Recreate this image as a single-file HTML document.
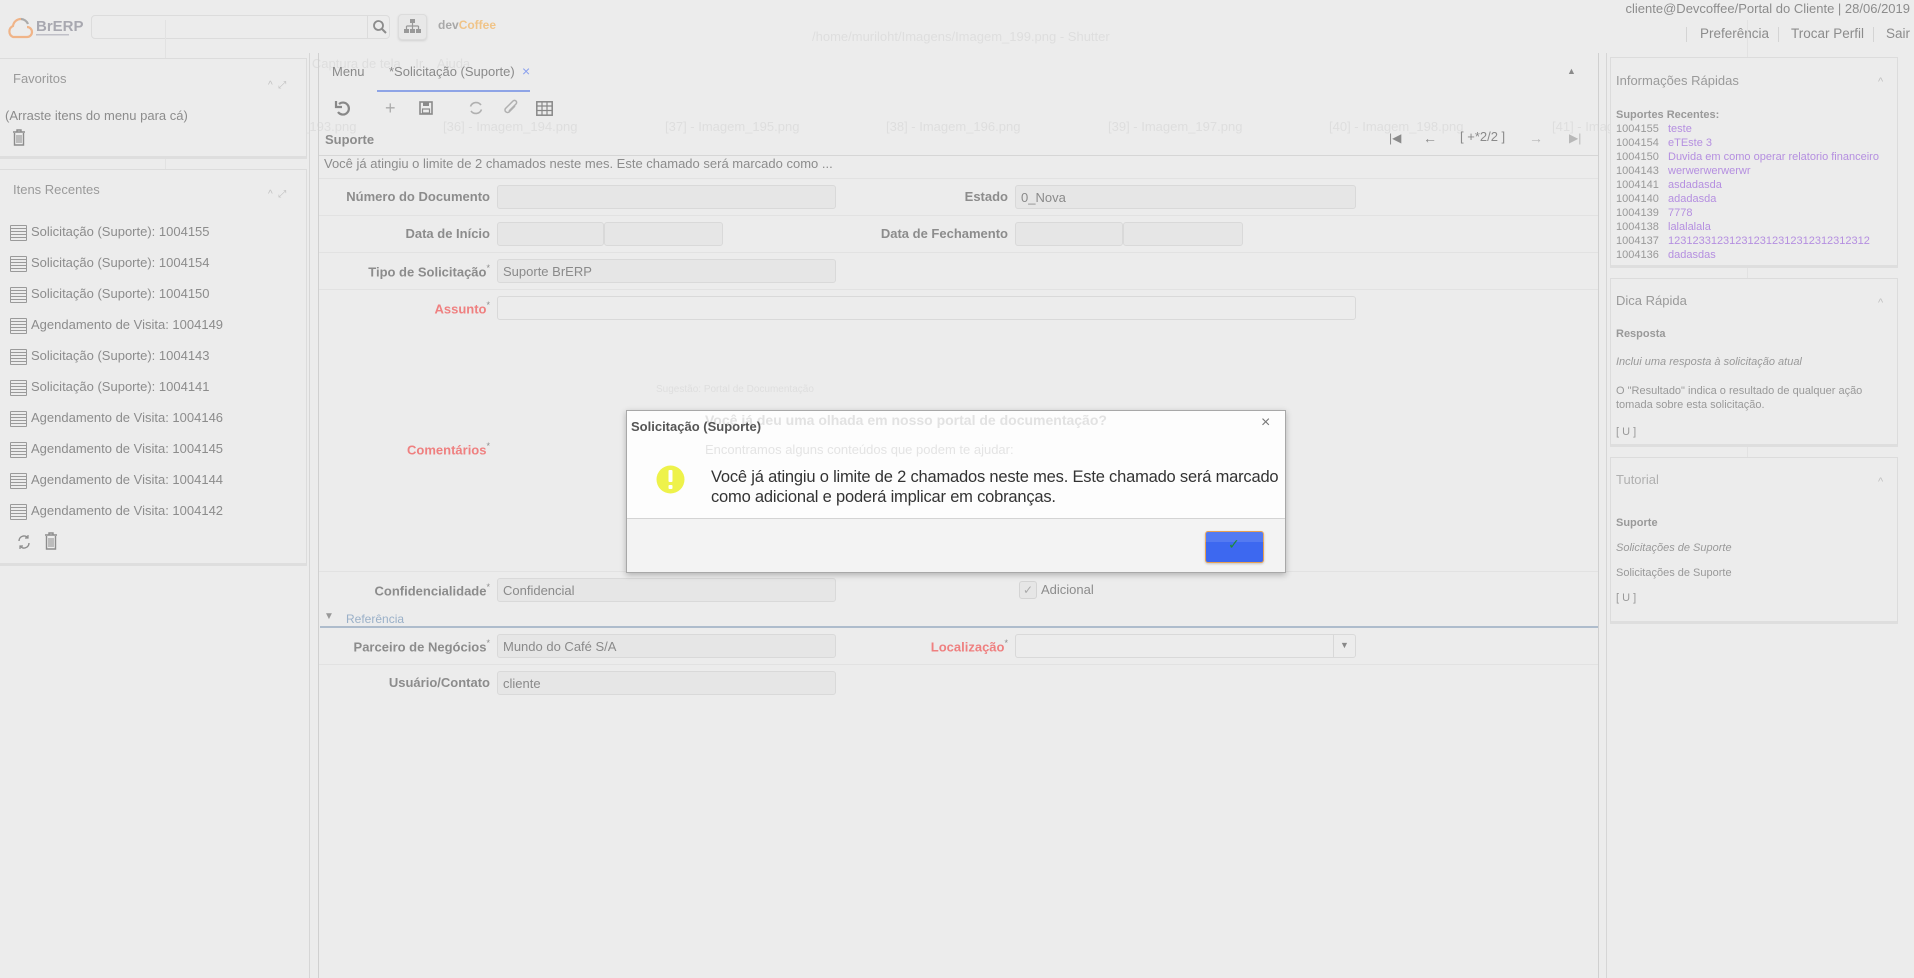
<!DOCTYPE html>
<html><head><meta charset="utf-8">
<style>
*{margin:0;padding:0;box-sizing:border-box}
body{width:1914px;height:978px;background:#ececec;font-family:"Liberation Sans",sans-serif;color:#8a8a8a;position:relative;overflow:hidden}
.a{position:absolute;white-space:nowrap}
.lbl{position:absolute;font-size:13px;font-weight:bold;color:#8c8c8c;text-align:right;white-space:nowrap}
.req{color:#ef8080}
.inp{position:absolute;background:#e6e6e6;border:1px solid #d9d9d9;border-radius:3px;font-size:13px;color:#8a8a8a;padding:4px 5px;height:24px;line-height:15px}
.hl{position:absolute;height:1px;background:#e2e2e2}
.box{position:absolute;border:1px solid #dcdcdc;border-bottom:3px solid #dedede;background:#ececec}
.ghost{position:absolute;color:#dedede;white-space:nowrap;font-size:13px}
.ri{position:absolute;left:10px;font-size:13px;color:#8c8c8c}
.ri:before{content:"";position:absolute;left:0;top:1px;width:15px;height:14px;border:1.5px solid #9a9a9a;border-radius:1px;background:repeating-linear-gradient(#ececec 0 2px,#9a9a9a 2px 3px) }
.ri span{margin-left:21px}
.sr{font-size:11px;line-height:14px}
.sr b{font-weight:normal;color:#999;display:inline-block;width:52px}
.sr i{font-style:normal;color:#b58fe0}
</style></head><body>

<svg class="a" style="left:7px;top:15px" width="80" height="24" viewBox="0 0 80 24">
<path d="M14 4 A8 8 0 0 0 6 11 A6 6 0 0 0 6 22 H20 A5 5 0 0 0 20 12" fill="none" stroke="#f0b488" stroke-width="2.2"/>
<path d="M14 4 A8 8 0 0 1 21 9" fill="none" stroke="#aaa" stroke-width="2.2"/>
<text x="29" y="16" font-family="Liberation Sans" font-weight="bold" font-size="15" fill="#a8a8b0">BrERP</text>
<rect x="29" y="19" width="33" height="1.5" fill="#c0c0c8"/>
</svg>
<div class="a" style="left:91px;top:15px;width:299px;height:24px;border:1px solid #dcdcdc;border-radius:4px;background:#ececec"></div>
<div class="a" style="left:367px;top:15px;width:1px;height:24px;background:#dcdcdc"></div>
<svg class="a" style="left:372px;top:19px" width="16" height="16"><circle cx="6.5" cy="6.5" r="4.5" fill="none" stroke="#8c8c8c" stroke-width="1.8"/><path d="M10 10 L14 14" stroke="#8c8c8c" stroke-width="2"/></svg>
<div class="a" style="left:398px;top:14px;width:29px;height:26px;border:1px solid #dcdcdc;border-radius:4px;background:#e8e8e8;box-shadow:0 1px 2px #d0d0d0"></div>
<svg class="a" style="left:404px;top:19px" width="17" height="15"><rect x="6" y="0" width="5" height="4" fill="#999"/><path d="M8.5 4V7M2.5 7H14.5M2.5 7V10M8.5 7V10M14.5 7V10" stroke="#999" stroke-width="1.2" fill="none"/><rect x="0" y="10" width="5" height="4" fill="#999"/><rect x="6" y="10" width="5" height="4" fill="#999"/><rect x="12" y="10" width="5" height="4" fill="#999"/></svg>
<div class="a" style="left:438px;top:18px;font-size:12px;font-weight:bold;color:#a8a8a8">dev<span style="color:#f0c488">Coffee</span></div>

<div class="a" style="right:4px;top:1px;font-size:13px;color:#8c8c8c">cliente@Devcoffee/Portal do Cliente | 28/06/2019</div>
<div class="a" style="left:1686px;top:27px;width:1px;height:15px;background:#d4d4d4"></div>
<div class="a" style="left:1700px;top:26px;font-size:13.5px;color:#8c8c8c">Preferência</div>
<div class="a" style="left:1778px;top:27px;width:1px;height:15px;background:#d4d4d4"></div>
<div class="a" style="left:1791px;top:26px;font-size:13.5px;color:#8c8c8c">Trocar Perfil</div>
<div class="a" style="left:1873px;top:27px;width:1px;height:15px;background:#d4d4d4"></div>
<div class="a" style="left:1886px;top:26px;font-size:13.5px;color:#8c8c8c">Sair</div>

<div class="ghost" style="left:812px;top:29px;font-size:13px">/home/muriloht/Imagens/Imagem_199.png - Shutter</div>
<div class="ghost" style="left:171px;top:56px">Arquivo &nbsp;&nbsp; Editar &nbsp;&nbsp; Ver &nbsp;&nbsp; Captura de tela &nbsp;&nbsp; Ir &nbsp;&nbsp; Ajuda</div>
<div class="ghost" style="left:222px;top:119px">[35] - Imagem_193.png</div>
<div class="ghost" style="left:443px;top:119px">[36] - Imagem_194.png</div>
<div class="ghost" style="left:665px;top:119px">[37] - Imagem_195.png</div>
<div class="ghost" style="left:886px;top:119px">[38] - Imagem_196.png</div>
<div class="ghost" style="left:1108px;top:119px">[39] - Imagem_197.png</div>
<div class="ghost" style="left:1329px;top:119px">[40] - Imagem_198.png</div>
<div class="ghost" style="left:1552px;top:119px">[41] - Imagem_199.png</div>
<div class="a" style="left:165px;top:20px;width:1px;height:520px;background:#e2e2e2"></div>
<div class="a" style="left:1747px;top:20px;width:1px;height:520px;background:#e2e2e2"></div>

<div class="box" style="left:-2px;top:58px;width:309px;height:101px"></div>
<div class="a" style="left:13px;top:71px;font-size:13px;color:#9a9a9a">Favoritos</div>
<div class="a" style="left:5px;top:108px;font-size:13px;color:#8c8c8c">(Arraste itens do menu para cá)</div>
<svg class="a" style="left:12px;top:129px" width="14" height="17"><path d="M1 3H13M5 3V1H9V3M2.5 4V16H11.5V4" fill="none" stroke="#8c8c8c" stroke-width="1.4"/><path d="M5 6V14M7 6V14M9 6V14" stroke="#8c8c8c" stroke-width="1"/></svg>
<div class="box" style="left:-2px;top:169px;width:309px;height:397px"></div>
<div class="a" style="left:13px;top:182px;font-size:13px;color:#9a9a9a">Itens Recentes</div>
<div class="a" style="left:268px;top:189px;font-size:10px;color:#c0c0c0">^ &nbsp;⤢</div>
<div class="a" style="left:268px;top:80px;font-size:10px;color:#c0c0c0">^ &nbsp;⤢</div>
<div class="ri" style="top:224px"><span>Solicitação (Suporte): 1004155</span></div>
<div class="ri" style="top:255px"><span>Solicitação (Suporte): 1004154</span></div>
<div class="ri" style="top:286px"><span>Solicitação (Suporte): 1004150</span></div>
<div class="ri" style="top:317px"><span>Agendamento de Visita: 1004149</span></div>
<div class="ri" style="top:348px"><span>Solicitação (Suporte): 1004143</span></div>
<div class="ri" style="top:379px"><span>Solicitação (Suporte): 1004141</span></div>
<div class="ri" style="top:410px"><span>Agendamento de Visita: 1004146</span></div>
<div class="ri" style="top:441px"><span>Agendamento de Visita: 1004145</span></div>
<div class="ri" style="top:472px"><span>Agendamento de Visita: 1004144</span></div>
<div class="ri" style="top:503px"><span>Agendamento de Visita: 1004142</span></div>
<svg class="a" style="left:17px;top:534px" width="14" height="16"><path d="M11 4A5 5 0 0 0 2 7M3 12A5 5 0 0 0 12 9" fill="none" stroke="#8c8c8c" stroke-width="1.4"/><path d="M11 1V4H8M3 15V12H6" fill="none" stroke="#8c8c8c" stroke-width="1.2"/></svg>
<svg class="a" style="left:44px;top:532px" width="14" height="18"><path d="M1 3H13M5 3V1H9V3M2.5 4V17H11.5V4" fill="none" stroke="#8c8c8c" stroke-width="1.4"/><path d="M5 6V15M7 6V15M9 6V15" stroke="#8c8c8c" stroke-width="1"/></svg>

<div class="a" style="left:309px;top:53px;width:1px;height:925px;background:#d6d6d6"></div>
<div class="a" style="left:318px;top:53px;width:1px;height:925px;background:#d0d0d0"></div>
<div class="a" style="left:1598px;top:53px;width:1px;height:925px;background:#d0d0d0"></div>
<div class="a" style="left:1606px;top:53px;width:1px;height:925px;background:#d6d6d6"></div>

<div class="a" style="left:332px;top:64px;font-size:13px;color:#8a8a8a">Menu</div>
<div class="a" style="left:389px;top:64px;font-size:13px;color:#8a8a8a">*Solicitação (Suporte)</div>
<div class="a" style="left:522px;top:63px;font-size:14px;color:#8aa0ee">×</div>
<div class="a" style="left:377px;top:90px;width:153px;height:2px;background:#8ea4e6"></div>
<div class="a" style="left:1567px;top:66px;font-size:9px;color:#8a8a8a">▲</div>
<svg class="a" style="left:334px;top:100px" width="18" height="18"><path d="M5 4A6 6 0 1 1 4 12" fill="none" stroke="#888" stroke-width="2.2"/><path d="M2 1V7H8" fill="none" stroke="#888" stroke-width="2.2"/></svg>
<div class="a" style="left:385px;top:98px;font-size:18px;color:#aaa">+</div>
<svg class="a" style="left:419px;top:101px" width="14" height="14"><rect x="1" y="1" width="12" height="12" fill="none" stroke="#8a8a8a" stroke-width="1.6"/><rect x="4" y="1" width="6" height="4" fill="#8a8a8a"/><rect x="3.5" y="8" width="7" height="4" fill="none" stroke="#8a8a8a" stroke-width="1.2"/></svg>
<svg class="a" style="left:468px;top:100px" width="16" height="16"><path d="M13 5A6 6 0 0 0 2.5 6.5M3 11A6 6 0 0 0 13.5 9.5" fill="none" stroke="#b0b0b0" stroke-width="1.6"/></svg>
<svg class="a" style="left:503px;top:99px" width="16" height="18"><path d="M12 7L6 13A2.5 2.5 0 0 1 2.5 9.5L10 2A2 2 0 0 1 13 5L6 12" fill="none" stroke="#b0b0b0" stroke-width="1.5"/></svg>
<svg class="a" style="left:536px;top:101px" width="17" height="15"><rect x="0.8" y="0.8" width="15.4" height="13.4" fill="none" stroke="#888" stroke-width="1.5"/><path d="M1 5H16M1 9.5H16M6 1V14M11 1V14" stroke="#888" stroke-width="1.2"/></svg>

<div class="a" style="left:325px;top:132px;font-size:13px;font-weight:bold;color:#8c8c8c">Suporte</div>
<div class="a" style="left:1389px;top:131px;font-size:12px;color:#8a8a8a">|◀</div>
<div class="a" style="left:1423px;top:130px;font-size:14px;color:#8a8a8a">←</div>
<div class="a" style="left:1460px;top:129px;font-size:13px;color:#8a8a8a">[ +*2/2 ]</div>
<div class="a" style="left:1529px;top:130px;font-size:14px;color:#b8b8b8">→</div>
<div class="a" style="left:1569px;top:131px;font-size:12px;color:#b8b8b8">▶|</div>
<div class="hl" style="left:319px;top:155px;width:1279px;background:#d6d6d6"></div>
<div class="a" style="left:324px;top:156px;font-size:13px;color:#8c8c8c">Você já atingiu o limite de 2 chamados neste mes. Este chamado será marcado como ...</div>

<div class="hl" style="left:319px;top:178px;width:1279px"></div>
<div class="hl" style="left:319px;top:215px;width:1279px"></div>
<div class="hl" style="left:319px;top:252px;width:1279px"></div>
<div class="hl" style="left:319px;top:289px;width:1279px"></div>
<div class="hl" style="left:319px;top:571px;width:1279px"></div>
<div class="hl" style="left:319px;top:664px;width:1279px"></div>

<div class="lbl" style="right:1424px;top:189px">Número do Documento</div>
<div class="inp" style="left:497px;top:185px;width:339px"></div>
<div class="lbl" style="right:906px;top:189px">Estado</div>
<div class="inp" style="left:1015px;top:185px;width:341px">0_Nova</div>

<div class="lbl" style="right:1424px;top:226px">Data de Início</div>
<div class="inp" style="left:497px;top:222px;width:107px"></div>
<div class="inp" style="left:604px;top:222px;width:119px"></div>
<div class="lbl" style="right:906px;top:226px">Data de Fechamento</div>
<div class="inp" style="left:1015px;top:222px;width:108px"></div>
<div class="inp" style="left:1123px;top:222px;width:120px"></div>

<div class="lbl" style="right:1424px;top:263px">Tipo de Solicitação<sup style="font-size:9px;font-weight:normal">*</sup></div>
<div class="inp" style="left:497px;top:259px;width:339px">Suporte BrERP</div>

<div class="lbl req" style="right:1424px;top:300px">Assunto<sup style="font-size:9px;font-weight:normal;color:#8c8c8c">*</sup></div>
<div class="inp" style="left:497px;top:296px;width:859px;background:#ececec"></div>

<div class="lbl req" style="right:1424px;top:441px">Comentários<sup style="font-size:9px;font-weight:normal;color:#8c8c8c">*</sup></div>
<div class="ghost" style="left:656px;top:384px;font-size:10px">Sugestão: Portal de Documentação</div>
<div class="a" style="left:705px;top:516px;font-size:13px;color:#d8d0ee;line-height:16px">Quais rotinas de manutenção precisam ser executadas no PostgreSQL<br>regularmente?</div>

<div class="lbl" style="right:1424px;top:582px">Confidencialidade<sup style="font-size:9px;font-weight:normal">*</sup></div>
<div class="inp" style="left:497px;top:578px;width:339px">Confidencial</div>
<div class="a" style="left:1019px;top:581px;width:18px;height:18px;border:1px solid #d4d4d4;border-radius:3px;background:#e6e6e6;font-size:12px;color:#aaa;text-align:center;line-height:16px">✓</div>
<div class="a" style="left:1041px;top:582px;font-size:13px;color:#8c8c8c">Adicional</div>

<div class="a" style="left:324px;top:611px;font-size:10px;color:#999">▼</div>
<div class="a" style="left:346px;top:612px;font-size:12px;color:#9ab0c8">Referência</div>
<div class="a" style="left:320px;top:626px;width:1278px;height:2px;background:#aebccc"></div>

<div class="lbl" style="right:1424px;top:638px">Parceiro de Negócios<sup style="font-size:9px;font-weight:normal">*</sup></div>
<div class="inp" style="left:497px;top:634px;width:339px">Mundo do Café S/A</div>
<div class="lbl req" style="right:906px;top:638px">Localização<sup style="font-size:9px;font-weight:normal;color:#8c8c8c">*</sup></div>
<div class="inp" style="left:1015px;top:634px;width:341px;background:#ececec"></div>
<div class="a" style="left:1333px;top:635px;width:1px;height:22px;background:#d8d8d8"></div>
<div class="a" style="left:1340px;top:640px;font-size:9px;color:#888">▼</div>

<div class="lbl" style="right:1424px;top:675px">Usuário/Contato</div>
<div class="inp" style="left:497px;top:671px;width:339px">cliente</div>

<div class="box" style="left:1610px;top:57px;width:288px;height:211px"></div>
<div class="a" style="left:1616px;top:73px;font-size:13px;color:#9a9a9a">Informações Rápidas</div>
<div class="a" style="left:1878px;top:76px;font-size:11px;color:#c0c0c0">^</div>
<div class="a sr" style="left:1616px;top:108px"><span style="font-weight:bold;color:#999">Suportes Recentes:</span><br>
<b>1004155</b><i>teste</i><br><b>1004154</b><i>eTEste 3</i><br><b>1004150</b><i>Duvida em como operar relatorio financeiro</i><br><b>1004143</b><i>werwerwerwerwr</i><br><b>1004141</b><i>asdadasda</i><br><b>1004140</b><i>adadasda</i><br><b>1004139</b><i>7778</i><br><b>1004138</b><i>lalalalala</i><br><b>1004137</b><i>123123312312312312312312312312312</i><br><b>1004136</b><i>dadasdas</i></div>

<div class="box" style="left:1610px;top:278px;width:288px;height:169px"></div>
<div class="a" style="left:1616px;top:293px;font-size:13px;color:#9a9a9a">Dica Rápida</div>
<div class="a" style="left:1878px;top:297px;font-size:11px;color:#c0c0c0">^</div>
<div class="a" style="left:1616px;top:328px;font-size:11px;font-weight:bold;color:#999">Resposta</div>
<div class="a" style="left:1616px;top:356px;font-size:11px;font-style:italic;color:#999">Inclui uma resposta à solicitação atual</div>
<div class="a" style="left:1616px;top:384px;font-size:11px;color:#999;line-height:14px">O "Resultado" indica o resultado de qualquer ação<br>tomada sobre esta solicitação.</div>
<div class="a" style="left:1616px;top:426px;font-size:11px;color:#999">[ U ]</div>

<div class="box" style="left:1610px;top:457px;width:288px;height:167px"></div>
<div class="a" style="left:1616px;top:472px;font-size:13px;color:#b0b0b0">Tutorial</div>
<div class="a" style="left:1878px;top:476px;font-size:11px;color:#c0c0c0">^</div>
<div class="a" style="left:1616px;top:517px;font-size:11px;font-weight:bold;color:#999">Suporte</div>
<div class="a" style="left:1616px;top:542px;font-size:11px;font-style:italic;color:#999">Solicitações de Suporte</div>
<div class="a" style="left:1616px;top:567px;font-size:11px;color:#999">Solicitações de Suporte</div>
<div class="a" style="left:1616px;top:592px;font-size:11px;color:#999">[ U ]</div>

<div class="a" style="left:626px;top:410px;width:660px;height:163px;border:1px solid #a8a8a8;background:#f3f3f3;box-shadow:0 2px 6px rgba(0,0,0,0.25)"></div>
<div class="a" style="left:627px;top:411px;width:658px;height:107px;background:rgba(255,255,255,0.78)"></div>
<div class="a" style="left:627px;top:518px;width:658px;height:1px;background:#d4d4d4"></div>
<div class="a" style="left:705px;top:412px;font-size:14px;font-weight:bold;color:#e2e2e2">Você já deu uma olhada em nosso portal de documentação?</div>
<div class="a" style="left:705px;top:442px;font-size:13px;color:#e4e4e4">Encontramos alguns conteúdos que podem te ajudar:</div>
<div class="a" style="left:631px;top:419px;font-size:13px;font-weight:bold;color:#555">Solicitação (Suporte)</div>
<div class="a" style="left:1261px;top:414px;font-size:16px;color:#777">×</div>
<svg class="a" style="left:656px;top:465px" width="29" height="29"><circle cx="14.5" cy="14.5" r="14" fill="#eef24a"/><rect x="12.5" y="5" width="4" height="12" rx="1" fill="#fff"/><rect x="12.5" y="20" width="4" height="4" rx="1" fill="#fff"/></svg>
<div class="a" style="left:711px;top:467px;font-size:16.5px;color:#333;line-height:20px;letter-spacing:-0.2px">Você já atingiu o limite de 2 chamados neste mes. Este chamado será marcado<br>como adicional e poderá implicar em cobranças.</div>
<div class="a" style="left:1205px;top:531px;width:59px;height:32px;background:#3d68f0;border:1px solid #e8a050;border-radius:3px;box-shadow:0 1px 2px rgba(0,0,0,0.2)"></div>
<div class="a" style="left:1205px;top:532px;width:59px;height:10px;background:rgba(255,255,255,0.12)"></div>
<div class="a" style="left:1228px;top:536px;font-size:14px;color:#1f8a3a">✓</div>
</body></html>
